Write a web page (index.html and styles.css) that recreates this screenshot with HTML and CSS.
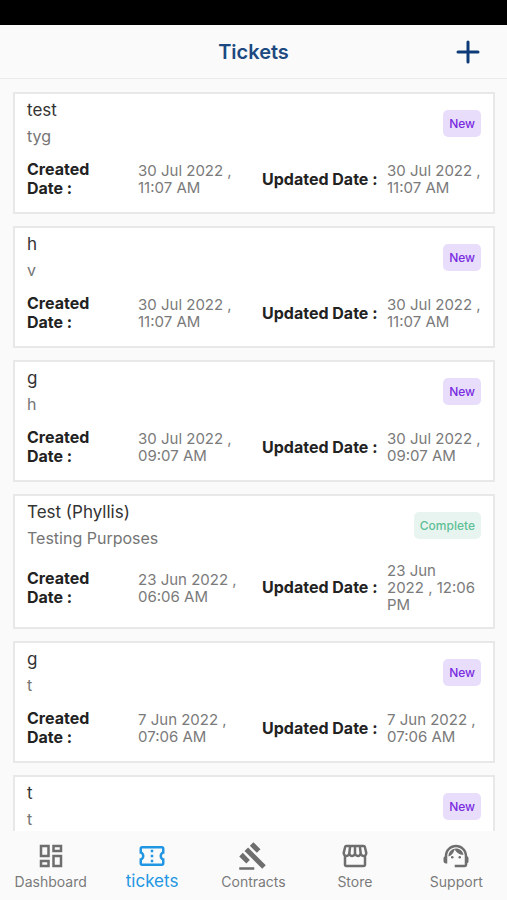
FILE: index.html
```html
<!DOCTYPE html>
<html lang="en">
<head>
<meta charset="utf-8">
<meta name="viewport" content="width=device-width, initial-scale=1">
<title>Tickets</title>
<link rel="stylesheet" href="styles.css">
</head>
<body>
<div class="status-bar"></div>
<header class="app-bar">
  <h1 class="app-title">Tickets</h1>
  <button class="add-button" type="button" aria-label="Add ticket">
    <svg class="add-icon" viewBox="0 0 24 24"><path d="M12 2v20M2 12h20"/></svg>
  </button>
</header>
<main class="ticket-list">
  <article class="ticket">
    <div class="ticket-head">
      <div><h2 class="ticket-title">test</h2><p class="ticket-text">tyg</p></div>
      <span class="badge badge-new">New</span>
    </div>
    <dl class="ticket-dates">
      <dt class="created">Created Date :</dt><dd>30 Jul 2022&nbsp;, 11:07 AM</dd>
      <dt>Updated Date :</dt><dd>30 Jul 2022&nbsp;, 11:07 AM</dd>
    </dl>
  </article>
  <article class="ticket">
    <div class="ticket-head">
      <div><h2 class="ticket-title">h</h2><p class="ticket-text">v</p></div>
      <span class="badge badge-new">New</span>
    </div>
    <dl class="ticket-dates">
      <dt class="created">Created Date :</dt><dd>30 Jul 2022&nbsp;, 11:07 AM</dd>
      <dt>Updated Date :</dt><dd>30 Jul 2022&nbsp;, 11:07 AM</dd>
    </dl>
  </article>
  <article class="ticket">
    <div class="ticket-head">
      <div><h2 class="ticket-title">g</h2><p class="ticket-text">h</p></div>
      <span class="badge badge-new">New</span>
    </div>
    <dl class="ticket-dates">
      <dt class="created">Created Date :</dt><dd>30 Jul 2022&nbsp;, 09:07 AM</dd>
      <dt>Updated Date :</dt><dd>30 Jul 2022&nbsp;, 09:07 AM</dd>
    </dl>
  </article>
  <article class="ticket">
    <div class="ticket-head">
      <div><h2 class="ticket-title">Test (Phyllis)</h2><p class="ticket-text">Testing Purposes</p></div>
      <span class="badge badge-complete">Complete</span>
    </div>
    <dl class="ticket-dates">
      <dt class="created">Created Date :</dt><dd>23 Jun 2022&nbsp;, 06:06 AM</dd>
      <dt>Updated Date :</dt><dd>23 Jun 2022&nbsp;, 12:06 PM</dd>
    </dl>
  </article>
  <article class="ticket">
    <div class="ticket-head">
      <div><h2 class="ticket-title">g</h2><p class="ticket-text">t</p></div>
      <span class="badge badge-new">New</span>
    </div>
    <dl class="ticket-dates">
      <dt class="created">Created Date :</dt><dd>7 Jun 2022&nbsp;, 07:06 AM</dd>
      <dt>Updated Date :</dt><dd>7 Jun 2022&nbsp;, 07:06 AM</dd>
    </dl>
  </article>
  <article class="ticket">
    <div class="ticket-head">
      <div><h2 class="ticket-title">t</h2><p class="ticket-text">t</p></div>
      <span class="badge badge-new">New</span>
    </div>
  </article>
</main>
<nav class="tab-bar">
  <a class="tab" href="#dashboard">
    <svg class="tab-icon" viewBox="0 0 24 24"><path d="M19 5v2h-4V5h4M9 5v6H5V5h4m10 8v6h-4v-6h4M9 17v2H5v-2h4M21 3h-8v6h8V3zM11 3H3v10h8V3zm10 8h-8v10h8V11zm-10 4H3v6h8v-6z"/></svg>
    <span>Dashboard</span>
  </a>
  <a class="tab tab-active" href="#tickets" aria-current="page">
    <svg class="tab-icon" viewBox="0 0 24 24"><path d="M22 10V6c0-1.11-.9-2-2-2H4c-1.1 0-1.99.89-1.99 2v4c1.1 0 1.99.9 1.99 2s-.89 2-2 2v4c0 1.1.9 2 2 2h16c1.1 0 2-.9 2-2v-4c-1.1 0-2-.9-2-2s.9-2 2-2zm-2-1.46c-1.19.69-2 1.99-2 3.46s.81 2.77 2 3.46V18H4v-2.54c1.19-.69 2-1.99 2-3.46 0-1.48-.8-2.77-1.99-3.46L4 6h16v2.54zM11 15h2v2h-2zm0-4h2v2h-2zm0-4h2v2h-2z"/></svg>
    <span>tickets</span>
  </a>
  <a class="tab" href="#contracts">
    <svg class="tab-icon" viewBox="0 0 24 24"><path d="M1 21h12v2H1zM5.245 8.07l2.83-2.827 14.14 14.142-2.828 2.828zM12.317 1l5.657 5.656-2.83 2.83-5.654-5.66zM3.825 9.485l5.657 5.657-2.828 2.828-5.657-5.657z"/></svg>
    <span>Contracts</span>
  </a>
  <a class="tab" href="#store">
    <svg class="tab-icon" viewBox="0 0 24 24"><path d="M21.9 8.89l-1.05-4.37c-.22-.9-1-1.52-1.91-1.52H5.05c-.9 0-1.69.63-1.9 1.52L2.1 8.89c-.24 1.02-.02 2.06.62 2.88.08.11.19.19.28.29V19c0 1.1.9 2 2 2h14c1.1 0 2-.9 2-2v-6.94c.09-.09.2-.18.28-.28.64-.82.87-1.87.62-2.89zm-2.99-3.9l1.05 4.37c.1.42.01.84-.25 1.17-.14.18-.44.47-.94.47-.61 0-1.14-.49-1.21-1.14L16.98 5l1.93-.01zM13 5h1.96l.54 4.52c.05.39-.07.78-.33 1.07-.22.26-.54.41-.95.41-.67 0-1.22-.59-1.22-1.31V5zM8.49 9.52L9.04 5H11v4.69c0 .72-.55 1.31-1.29 1.31-.34 0-.65-.15-.89-.41-.25-.29-.37-.68-.33-1.07zm-4.45-.16L5.05 5h1.97l-.58 4.86c-.08.65-.6 1.14-1.21 1.14-.49 0-.8-.29-.93-.47-.27-.32-.36-.75-.26-1.17zM5 19v-6.03c.08.01.15.03.23.03.87 0 1.66-.36 2.24-.95.6.6 1.4.95 2.31.95.87 0 1.65-.36 2.23-.93.59.57 1.39.93 2.29.93.84 0 1.64-.35 2.24-.95.58.59 1.37.95 2.24.95.08 0 .15-.02.23-.03V19H5z"/></svg>
    <span>Store</span>
  </a>
  <a class="tab" href="#support">
    <svg class="tab-icon" viewBox="0 0 24 24"><path d="M21 12.22C21 6.73 16.74 3 12 3c-4.69 0-9 3.65-9 9.28-.6.34-1 .98-1 1.72v2c0 1.1.9 2 2 2h1v-6.1c0-3.87 3.13-7 7-7s7 3.13 7 7V19h-8v2h8c1.1 0 2-.9 2-2v-1.22c.59-.31 1-.92 1-1.64v-2.3c0-.7-.41-1.31-1-1.62z"/><circle cx="9" cy="13" r="1"/><circle cx="15" cy="13" r="1"/><path d="M18 11.03C17.52 8.18 15.04 6 12.05 6c-3.03 0-6.29 2.51-6.03 6.45 2.47-1.01 4.33-3.21 4.86-5.89 1.31 2.63 4 4.44 7.12 4.47z"/></svg>
    <span>Support</span>
  </a>
</nav>
</body>
</html>
```
FILE: styles.css
```css
* {
  box-sizing: border-box;
}

body {
  margin: 0;
  height: 100vh;
  display: flex;
  flex-direction: column;
  background: #fafafa;
  color: #333;
  font-family: Inter, sans-serif;
}

h1, h2, p, dl, dd {
  margin: 0;
}

.status-bar {
  flex: none;
  height: 25px;
  background: #000;
}

.app-bar {
  flex: none;
  display: grid;
  grid-template-columns: 1fr auto 1fr;
  align-items: center;
  height: 54px;
  padding: 0 24px;
  border-bottom: 1px solid #ececec;
}

.app-title {
  grid-column: 2;
  color: #1c4a80;
  font-size: 20px;
  font-weight: 600;
  line-height: 24px;
}

.add-button {
  justify-self: end;
  display: flex;
  padding: 0;
  border: 0;
  background: none;
}

.add-icon {
  width: 30px;
  height: 30px;
  padding: 3px;
  fill: none;
  stroke: #0d3b78;
  stroke-width: 3;
  stroke-linecap: round;
}

.ticket-list {
  flex: 1;
  min-height: 0;
  overflow-y: auto;
  scrollbar-width: none;
  padding: 13px 12px 0 13px;
}

.ticket {
  margin-bottom: 12px;
  padding: 3px 12px 14px;
  border: 2px solid #e8e8e8;
  background: #fff;
}

.ticket-head {
  display: flex;
  align-items: center;
  justify-content: space-between;
}

.ticket-title,
.ticket-text {
  font-size: 16px;
  font-weight: 400;
  line-height: 26px;
}

.ticket-title {
  font-size: 17px;
}

.ticket-text {
  color: #757575;
}

.badge {
  padding: 5px 6px;
  border-radius: 5px;
  font-size: 12px;
  font-weight: 500;
  line-height: 17px;
}

.badge-new {
  background: #e8defc;
  color: #7a2be0;
}

.badge-complete {
  background: #e8f4ef;
  color: #5fbf97;
}

.ticket-dates {
  display: grid;
  grid-template-columns: 111fr 124fr 125fr 94fr;
  align-items: center;
  margin-top: 11px;
}

.ticket-dates dt {
  color: #222;
  font-size: 16px;
  font-weight: 700;
  line-height: 19px;
}

.ticket-dates .created {
  padding-right: 20px;
}

.ticket-dates dd {
  color: #7a7a7a;
  font-size: 15px;
  line-height: 17px;
}

.tab-bar {
  flex: none;
  display: grid;
  grid-template-columns: repeat(5, 1fr);
  height: 69px;
  background: #fafafa;
}

.tab {
  display: flex;
  flex-direction: column;
  align-items: center;
  padding-top: 10px;
  color: #7a7a7a;
  font-size: 14px;
  line-height: 21px;
  text-decoration: none;
}

.tab-icon {
  width: 30px;
  height: 30px;
  fill: #6e6e6e;
}

.tab-active {
  color: #2196e3;
  font-size: 17px;
  line-height: 20px;
}

.tab-active .tab-icon {
  fill: #2196e3;
}
```
